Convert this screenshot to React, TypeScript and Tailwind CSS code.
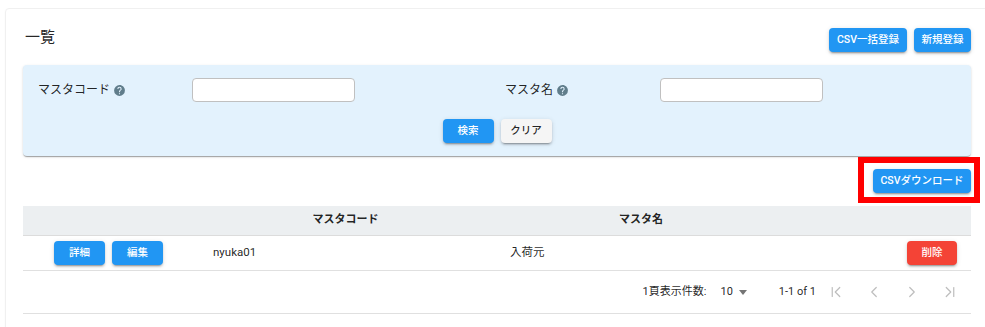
import React from 'react';
import { ChevronFirst, ChevronLast, ChevronLeft, ChevronRight } from 'lucide-react';

const font = "font-['Roboto','Noto_Sans_CJK_JP',sans-serif]";
const elev = 'shadow-[0_3px_1px_-2px_rgba(0,0,0,0.2),0_2px_2px_0_rgba(0,0,0,0.14),0_1px_5px_0_rgba(0,0,0,0.12)]';

const HelpIcon = () => (
  <svg width="13" height="13" viewBox="0 0 24 24" className="ml-[3px]">
    <path
      fill="#607d8b"
      d="M15.07,11.25L14.17,12.17C13.45,12.89 13,13.5 13,15H11V14.5C11,13.39 11.45,12.39 12.17,11.67L13.41,10.41C13.78,10.05 14,9.55 14,9C14,7.89 13.1,7 12,7A2,2 0 0,0 10,9H8A4,4 0 0,1 12,5A4,4 0 0,1 16,9C16,9.88 15.64,10.67 15.07,11.25M13,19H11V17H13M12,2A10,10 0 0,0 2,12A10,10 0 0,0 12,22A10,10 0 0,0 22,12C22,6.47 17.5,2 12,2Z"
    />
  </svg>
);

const Btn: React.FC<{ children: React.ReactNode; className?: string }> = ({ children, className = '' }) => (
  <button className={`h-[24px] rounded-[4px] text-[10.5px] font-medium whitespace-nowrap flex items-center justify-center ${elev} ${className}`}>
    {children}
  </button>
);

export default function App() {
  return (
    <div className={`w-[985px] h-[327px] overflow-hidden bg-white text-[rgba(0,0,0,0.87)] ${font}`}>
      <div className="ml-[5px] mt-[8px] w-[984px] h-[340px] rounded-[4px] border border-[#f0f0f0] shadow-[0_1px_2px_rgba(0,0,0,0.04)] px-[17px] pt-[19px]">
        {/* title row */}
        <div className="flex items-start justify-between">
          <h1 className="text-[15px] leading-[16px] mt-[1px] ml-[2px]">一覧</h1>
          <div className="flex gap-[7px]">
            <Btn className="w-[78px] bg-[#2196f3] text-white">CSV一括登録</Btn>
            <Btn className="w-[57px] bg-[#2196f3] text-white">新規登録</Btn>
          </div>
        </div>

        {/* search panel */}
        <div className="mt-[13px] h-[91px] rounded-[4px] bg-[#e3f2fd] shadow-[0_2px_1px_-1px_rgba(0,0,0,0.2),0_1px_1px_0_rgba(0,0,0,0.14),0_1px_3px_0_rgba(0,0,0,0.12)] px-[15px] pt-[13px]">
          <div className="flex">
            <div className="w-[467px] flex items-center">
              <div className="w-[154px] flex items-center text-[12px]">
                マスタコード
                <HelpIcon />
              </div>
              <input className="w-[163px] h-[24px] bg-white border border-[#c0c0c0] rounded-[4px]" />
            </div>
            <div className="flex items-center">
              <div className="w-[155px] flex items-center text-[12px]">
                マスタ名
                <HelpIcon />
              </div>
              <input className="w-[163px] h-[24px] bg-white border border-[#c0c0c0] rounded-[4px]" />
            </div>
          </div>
          <div className="mt-[17px] flex justify-center gap-[7px]">
            <Btn className="w-[51px] bg-[#2196f3] text-white">検索</Btn>
            <Btn className="w-[51px] bg-[#f5f5f5] text-[rgba(0,0,0,0.87)]">クリア</Btn>
          </div>
        </div>

        {/* csv download */}
        <div className="mt-[13px] flex justify-end">
          <div className="relative">
            <Btn className="w-[98px] bg-[#2196f3] text-white">CSVダウンロード</Btn>
            <div className="absolute left-[-15px] top-[-12px] w-[122px] h-[46px] border-[6px] border-[#ff0000] pointer-events-none" />
          </div>
        </div>

        {/* table */}
        <div className="mt-[13px] text-[11px]">
          <div className="grid grid-cols-[174px_297px_294px_183px] h-[30px] bg-[#eceff1] border-b border-[#dcdcdc] font-bold items-center">
            <div />
            <div className="text-center">マスタコード</div>
            <div className="text-center">マスタ名</div>
            <div />
          </div>
          <div className="grid grid-cols-[174px_297px_294px_183px] h-[35px] border-b border-[#e0e0e0] items-center text-[11.5px]">
            <div className="flex justify-center gap-[7px] pr-[3px]">
              <Btn className="w-[51px] bg-[#2196f3] text-white">詳細</Btn>
              <Btn className="w-[51px] bg-[#2196f3] text-white">編集</Btn>
            </div>
            <div className="pl-[16px]">nyuka01</div>
            <div className="pl-[16px]">入荷元</div>
            <div className="flex justify-end pr-[14px]">
              <Btn className="w-[50px] bg-[#f44336] text-white">削除</Btn>
            </div>
          </div>
          <div className="h-[43px] border-b border-[#e0e0e0] flex items-center justify-end pr-[9px] text-[11px]">
            <span>1頁表示件数:</span>
            <span className="ml-[14px]">10</span>
            <span className="ml-[6px] w-0 h-0 border-l-[4px] border-r-[4px] border-t-[5px] border-l-transparent border-r-transparent border-t-[#757575]" />
            <span className="ml-[32px]">1-1 of 1</span>
            <div className="ml-[8px] flex gap-[14px] text-[#bdbdbd]">
              <span className="w-[24px] flex justify-center"><ChevronFirst size={18} strokeWidth={1.6} /></span>
              <span className="w-[24px] flex justify-center"><ChevronLeft size={18} strokeWidth={1.6} /></span>
              <span className="w-[24px] flex justify-center"><ChevronRight size={18} strokeWidth={1.6} /></span>
              <span className="w-[24px] flex justify-center"><ChevronLast size={18} strokeWidth={1.6} /></span>
            </div>
          </div>
        </div>
      </div>
    </div>
  );
}
